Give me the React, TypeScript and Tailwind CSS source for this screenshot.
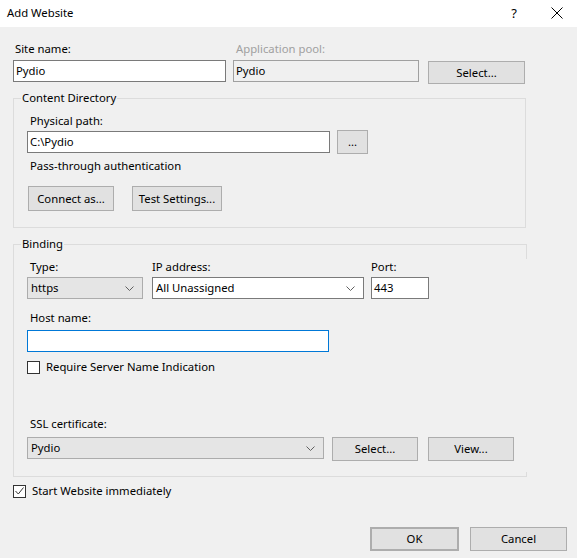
import type { ReactNode } from 'react';

const font = { fontFamily: '"Noto Sans", "Liberation Sans", sans-serif' };

function Button({ children, className = '' }: { children: ReactNode; className?: string }) {
    return (
        <div className={`flex items-center justify-center border border-[#adadad] bg-[#e1e1e1] text-black ${className}`}>
            {children}
        </div>
    );
}

function Chevron() {
    return (
        <svg width="9" height="5" viewBox="0 0 9 5" className="shrink-0">
            <path d="M0.5 0.5 L4.5 4.5 L8.5 0.5" fill="none" stroke="#606060" strokeWidth="1" />
        </svg>
    );
}

function Combo({ value, gray, className = '' }: { value: string; gray?: boolean; className?: string }) {
    return (
        <div
            className={`flex h-[22px] items-center justify-between pl-[3px] pr-[8px] ${
                gray ? 'border border-[#acacac] bg-[#e5e5e5]' : 'border border-[#7a7a7a] bg-white'
            } ${className}`}
        >
            <span>{value}</span>
            <Chevron />
        </div>
    );
}

function Legend({ children }: { children: ReactNode }) {
    return <span className="-mt-[9px] ml-[7px] block h-[16px] w-fit bg-[#f0f0f0] px-[1px] leading-[16px]">{children}</span>;
}

export default function App() {
    return (
        <div className="h-[558px] w-[577px] overflow-hidden bg-[#f0f0f0] text-[11.3px] leading-[16px] text-black" style={font}>
            <div className="flex h-[27px] items-center bg-white pb-[2px] pl-[7px]">
                <span className="flex-1">Add Website</span>
                <span className="mr-[34px] text-[13px]">?</span>
                <svg width="12" height="12" viewBox="0 0 12 12" className="mr-[14px]">
                    <path d="M0.5 0.5 L11.5 11.5 M11.5 0.5 L0.5 11.5" stroke="#000" strokeWidth="1" />
                </svg>
            </div>

            <div className="pl-[13px]">
                <div className="mt-[14px] flex items-start">
                    <div className="w-[213px]">
                        <div className="h-[16px] pl-[2px]">Site name:</div>
                        <div className="mt-[3px] flex h-[22px] items-center border border-[#7a7a7a] bg-white pl-[2px]">Pydio</div>
                    </div>
                    <div className="ml-[7px] w-[186px]">
                        <div className="h-[16px] pl-[3px] text-[#a0a0a0]">Application pool:</div>
                        <div className="mt-[3px] flex h-[22px] items-center border border-[#a0a0a0] bg-[#f0f0f0] pl-[2px]">Pydio</div>
                    </div>
                    <Button className="mt-[20px] ml-[9px] h-[23px] w-[97px]">Select...</Button>
                </div>

                <div className="mt-[14px] h-[130px] w-[513px] border border-[#dcdcdc]">
                    <Legend>Content Directory</Legend>
                    <div className="pl-[13px]">
                        <div className="mt-[7px] h-[16px] pl-[3px]">Physical path:</div>
                        <div className="mt-[1px] flex h-[24px] items-center">
                            <div className="flex h-[22px] w-[303px] items-center border border-[#7a7a7a] bg-white pl-[2px]">C:\Pydio</div>
                            <Button className="ml-[7px] h-[24px] w-[31px]">...</Button>
                        </div>
                        <div className="mt-[4px] h-[16px] pl-[3px]">Pass-through authentication</div>
                        <div className="mt-[12px] flex">
                            <Button className="ml-[1px] h-[25px] w-[86px]">Connect as...</Button>
                            <Button className="ml-[18px] h-[25px] w-[90px]">Test Settings...</Button>
                        </div>
                    </div>
                </div>

                <div className="relative mt-[16px] h-[233px] w-[513px] border border-r-0 border-[#dcdcdc]">
                    <span className="absolute -right-[1px] -top-[1px] h-[15px] w-[1px] bg-[#dcdcdc]" />
                    <span className="absolute -bottom-[1px] -right-[1px] h-[5px] w-[1px] bg-[#dcdcdc]" />
                    <Legend>Binding</Legend>
                    <div className="pl-[13px]">
                        <div className="mt-[7px] flex">
                            <div className="w-[116px]">
                                <div className="h-[16px] pl-[3px]">Type:</div>
                                <Combo value="https" gray className="mt-[2px]" />
                            </div>
                            <div className="ml-[9px] w-[212px]">
                                <div className="h-[16px]">IP address:</div>
                                <Combo value="All Unassigned" className="mt-[2px]" />
                            </div>
                            <div className="ml-[7px] w-[58px]">
                                <div className="h-[16px]">Port:</div>
                                <div className="mt-[2px] flex h-[22px] items-center border border-[#7a7a7a] bg-white pl-[2px]">443</div>
                            </div>
                        </div>
                        <div className="mt-[11px] h-[16px] pl-[3px]">Host name:</div>
                        <div className="mt-[4px] h-[22px] w-[302px] border border-[#0078d7] bg-white" />
                        <div className="mt-[7px] flex h-[16px] items-center">
                            <span className="h-[13px] w-[13px] border border-[#333333] bg-white" />
                            <span className="ml-[6px]">Require Server Name Indication</span>
                        </div>
                        <div className="mt-[41px] h-[16px] pl-[3px]">SSL certificate:</div>
                        <div className="mt-[5px] flex items-start">
                            <Combo value="Pydio" gray className="w-[297px]" />
                            <Button className="ml-[8px] h-[24px] w-[86px]">Select...</Button>
                            <Button className="ml-[10px] h-[24px] w-[86px]">View...</Button>
                        </div>
                    </div>
                </div>

                <div className="mt-[6px] flex h-[16px] items-center">
                    <span className="flex h-[13px] w-[13px] items-center justify-center border border-[#333333] bg-white">
                        <svg width="9" height="8" viewBox="0 0 9 8">
                            <path d="M0.5 4 L3.3 7 L8.5 0.5" fill="none" stroke="#333333" strokeWidth="1" />
                        </svg>
                    </span>
                    <span className="ml-[6px]">Start Website immediately</span>
                </div>

                <div className="mt-[28px] flex justify-end pr-[10px]">
                    <Button className="h-[24px] w-[89px] border-2 border-[#0078d7]">OK</Button>
                    <Button className="ml-[11px] h-[24px] w-[97px]">Cancel</Button>
                </div>
            </div>
        </div>
    );
}
